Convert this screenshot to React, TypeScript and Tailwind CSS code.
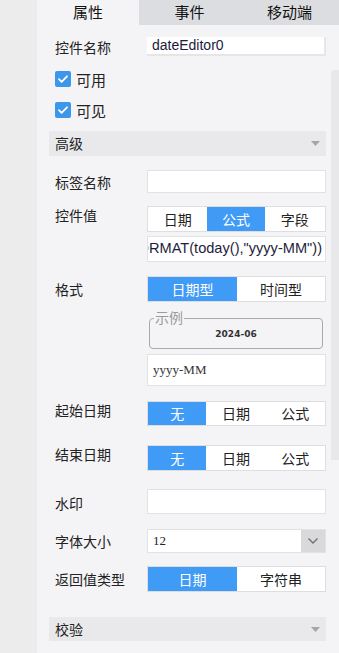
import React from "react";

const CJK = "font-['Noto_Sans_CJK_SC','Noto_Sans',sans-serif]";

function Segmented({
  items,
  active,
  widths,
  h,
}: {
  items: string[];
  active: number;
  widths: string[];
  h: string;
}) {
  return (
    <div className={`flex w-[179px] ${h} border border-[#dedee0] bg-white`}>
      {items.map((it, i) => (
        <div
          key={it}
          className={`${widths[i]} flex items-center justify-center text-[14px] ${
            i === active ? "bg-[#3f9bf6] text-white" : "text-[#222]"
          }`}
        >
          {it}
        </div>
      ))}
    </div>
  );
}

function Row({
  label,
  mt,
  labelH,
  children,
}: {
  label: string;
  mt: string;
  labelH: string;
  children: React.ReactNode;
}) {
  return (
    <div className={`flex items-start ${mt}`}>
      <div className={`w-[98px] pl-[6px] ${labelH} flex items-center text-[14px] leading-none text-[#222]`}>
        {label}
      </div>
      <div className="flex flex-col">{children}</div>
    </div>
  );
}

function Check({ label, mt }: { label: string; mt: string }) {
  return (
    <div className={`flex items-center gap-[5px] pl-[6px] ${mt} h-[16px]`}>
      <div className="w-[16px] h-[16px] rounded-[2px] bg-[#3c97ea] flex items-center justify-center">
        <svg width="12" height="12" viewBox="0 0 12 12" fill="none">
          <path d="M2 6.2l2.6 2.6L10 3.3" stroke="white" strokeWidth="1.8" strokeLinecap="round" strokeLinejoin="round" />
        </svg>
      </div>
      <span className="text-[15px] leading-none text-[#222]">{label}</span>
    </div>
  );
}

function Section({ title, mt, h }: { title: string; mt: string; h: string }) {
  return (
    <div className={`${mt} ${h} w-[277px] bg-[#e9e9eb] flex items-center justify-between pl-[6px] pr-[6px]`}>
      <span className="text-[14px] text-[#222]">{title}</span>
      <svg width="9" height="5" viewBox="0 0 9 5">
        <path d="M0 0h9L4.5 5z" fill="#a5a5a7" />
      </svg>
    </div>
  );
}

export default function App() {
  return (
    <div className={`flex w-[339px] h-[653px] overflow-hidden ${CJK}`}>
      <div className="w-[37px] bg-[#ececec]" />
      <div className="flex-1 flex flex-col bg-[#f4f4f6]">
        <div className="grid grid-cols-[102px_101px_99px] h-[25px] text-[15px] text-[#111]">
          <div className="bg-[#f4f4f6] flex items-center justify-center">属性</div>
          <div className="bg-[#dcdde0] flex items-center justify-center">事件</div>
          <div className="bg-[#dcdde0] flex items-center justify-center">移动端</div>
        </div>
        <div className="flex flex-1">
          <div className="w-[294px] pl-[12px] flex flex-col">
            <Row label="控件名称" mt="mt-[12px]" labelH="h-[19px]">
              <div className="w-[179px] h-[19px] bg-white border-r-2 border-b-2 border-[#e6e6e8] flex items-center pl-[5px] font-['Liberation_Sans',sans-serif] text-[14px] text-[#1c1c3a]">
                dateEditor0
              </div>
            </Row>
            <Check label="可用" mt="mt-[15px]" />
            <Check label="可见" mt="mt-[15px]" />
            <Section title="高级" mt="mt-[13px]" h="h-[25px]" />
            <Row label="标签名称" mt="mt-[14px]" labelH="h-[23px]">
              <div className="w-[179px] h-[23px] bg-white border border-[#e2e2e4]" />
            </Row>
            <Row label="控件值" mt="mt-[13px]" labelH="h-[17px]">
              <Segmented items={["日期", "公式", "字段"]} active={1} widths={["w-[60px]", "w-[58px]", "w-[61px]"]} h="h-[26px]" />
              <div className="mt-[4px] w-[179px] h-[26px] bg-white border border-[#e2e2e4] overflow-hidden flex items-center justify-end pr-[3px] font-['Liberation_Sans',sans-serif] text-[14.6px] text-[#1e1e3c] whitespace-nowrap">
                FORMAT(today(),"yyyy-MM"))
              </div>
            </Row>
            <Row label="格式" mt="mt-[14px]" labelH="h-[26px]">
              <Segmented items={["日期型", "时间型"]} active={0} widths={["w-[90px]", "w-[89px]"]} h="h-[26px]" />
              <div className="relative mt-[10px] ml-[2px] w-[174px] h-[37px]">
                <div className="absolute inset-x-0 top-[6px] bottom-0 border border-[#a9a9ab] rounded-[4px]" />
                <span className="absolute left-[5px] top-[-3px] px-[1px] bg-[#f4f4f6] text-[14px] leading-[16px] text-[#9a9a9c]">
                  示例
                </span>
                <div className="absolute inset-x-0 top-[16px] text-center font-['DejaVu_Sans',sans-serif] font-bold text-[9px] text-[#333]">
                  2024-06
                </div>
              </div>
              <div className="mt-[5px] w-[179px] h-[32px] bg-white border border-[#e2e2e4] flex items-center pl-[5px] font-['Liberation_Serif',serif] text-[13px] text-[#333]">
                yyyy-MM
              </div>
            </Row>
            <Row label="起始日期" mt="mt-[15px]" labelH="h-[17px]">
              <Segmented items={["无", "日期", "公式"]} active={0} widths={["w-[59px]", "w-[60px]", "w-[60px]"]} h="h-[25px]" />
            </Row>
            <Row label="结束日期" mt="mt-[19px]" labelH="h-[17px]">
              <Segmented items={["无", "日期", "公式"]} active={0} widths={["w-[59px]", "w-[60px]", "w-[60px]"]} h="h-[26px]" />
            </Row>
            <Row label="水印" mt="mt-[18px]" labelH="h-[27px]">
              <div className="w-[179px] h-[25px] bg-white border border-[#e2e2e4]" />
            </Row>
            <Row label="字体大小" mt="mt-[13px]" labelH="h-[24px]">
              <div className="w-[179px] h-[24px] bg-white border border-[#e2e2e4] flex">
                <div className="flex-1 flex items-center pl-[5px] font-['Liberation_Serif',serif] text-[13px] text-[#222]">12</div>
                <div className="w-[24px] bg-[#d9d9db] flex items-center justify-center">
                  <svg width="12" height="8" viewBox="0 0 12 8" fill="none">
                    <path d="M1.5 1.5l4.5 4.5 4.5-4.5" stroke="#707072" strokeWidth="1.4" />
                  </svg>
                </div>
              </div>
            </Row>
            <Row label="返回值类型" mt="mt-[13px]" labelH="h-[26px]">
              <Segmented items={["日期", "字符串"]} active={0} widths={["w-[90px]", "w-[89px]"]} h="h-[26px]" />
            </Row>
            <Section title="校验" mt="mt-[25px]" h="h-[24px]" />
          </div>
          <div className="w-[8px] flex flex-col">
            <div className="mt-[45px] h-[390px] bg-[#e8e8ea] rounded-tl-[3px]" />
          </div>
        </div>
      </div>
    </div>
  );
}
